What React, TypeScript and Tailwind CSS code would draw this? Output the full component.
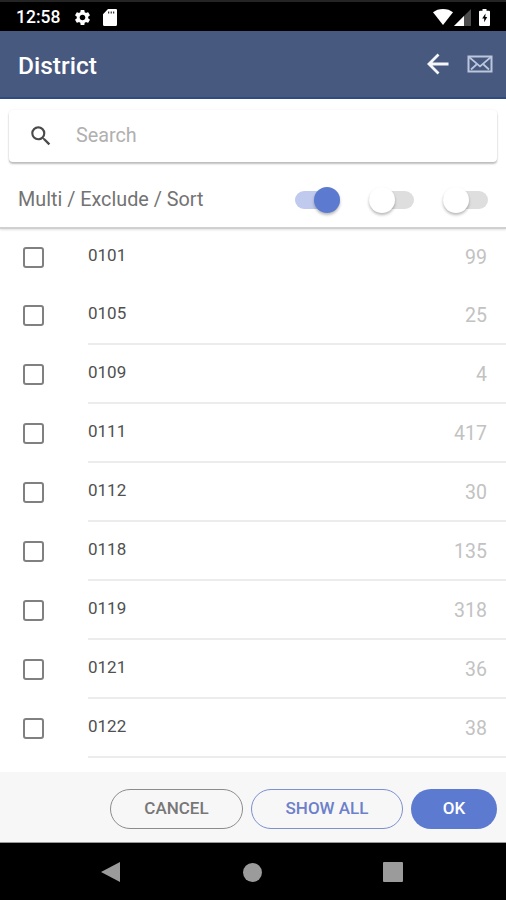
import React, { useState } from "react";
import { MdSearch, MdSettings } from "react-icons/md";

type District = {
  code: string;
  count: number;
};

const DISTRICTS: District[] = [
  { code: "0101", count: 99 },
  { code: "0105", count: 25 },
  { code: "0109", count: 4 },
  { code: "0111", count: 417 },
  { code: "0112", count: 30 },
  { code: "0118", count: 135 },
  { code: "0119", count: 318 },
  { code: "0121", count: 36 },
  { code: "0122", count: 38 },
];

const StatusBar: React.FC = () => (
  <div className="flex h-[31px] shrink-0 items-center border-t-2 border-[#242424] bg-black pt-px pl-4 text-white">
    <span className="w-[57px] pt-px text-[17.5px] leading-none font-medium">12:58</span>
    <MdSettings className="size-[19px]" />
    <svg className="ml-[11px] h-[17px] w-[14px]" viewBox="0 0 14 17" fill="currentColor">
      <path
        fillRule="evenodd"
        d="M5 0h7.3A1.5 1.5 0 0 1 14 1.6v13.8a1.6 1.6 0 0 1-1.7 1.6H1.7A1.6 1.6 0 0 1 0 15.400V5.200ZM5.200 2.600v1.800h1V2.600Zm2.500 0v1.800h1V2.600Zm2.500 0v1.800h1V2.600Z"
      />
    </svg>
    <div className="mr-4 ml-auto flex items-center">
      <svg className="h-4 w-5" viewBox="0 0 20 16" fill="currentColor">
        <path d="M10 16 0 3.300C2.600 1.200 6 0 10 0s7.400 1.200 10 3.300Z" />
      </svg>
      <svg className="ml-px h-[17px] w-[17px]" viewBox="0 0 17 17" fill="currentColor">
        <path d="M17 0v17H0Z" opacity=".3" />
        <path d="M10 7v10H0Z" />
      </svg>
      <svg className="ml-2 h-[17px] w-[11px]" viewBox="0 0 11 17" fill="currentColor">
        <path
          fillRule="evenodd"
          d="M3.500 0h4v1.700H10a1 1 0 0 1 1 1V16a1 1 0 0 1-1 1H1a1 1 0 0 1-1-1V2.700a1 1 0 0 1 1-1h2.500ZM6.500 4.500 3.200 9.600h2v3.700l3-5.200H6.300Z"
        />
      </svg>
    </div>
  </div>
);

const Header: React.FC = () => (
  <header className="flex h-[68px] shrink-0 items-center border-b-2 border-[#2f4b80] bg-[#48597f] pr-[13px] pl-[18px] text-white">
    <h1 className="pt-[5px] text-[24.5px] leading-none font-medium">District</h1>
    <button className="ml-auto">
      <svg className="size-[22px] text-[#f4f6fb]" viewBox="0 0 22 22" fill="none" stroke="currentColor">
        <path d="M11.500 1.500 2 11l9.500 9.500M2.500 11H21.500" strokeWidth="2.800" />
      </svg>
    </button>
    <button className="ml-[18px]">
      <svg className="h-[18px] w-[26px] text-[#bcc6dc]" viewBox="0 0 26 18" fill="none" stroke="currentColor">
        <rect x="1.500" y="1.500" width="23" height="15" strokeWidth="2" />
        <path d="m2 2 11 9.500L24 2M4 14.500l5.500-5M22 14.500l-5.500-5" strokeWidth="1.700" />
      </svg>
    </button>
  </header>
);

const Toggle: React.FC<{ on: boolean; onClick: () => void }> = ({ on, onClick }) => (
  <button
    onClick={onClick}
    className={`flex h-[18px] w-[45px] items-center rounded-full ${
      on ? "justify-end bg-[#c0caee]" : "justify-start bg-[#dedede]"
    }`}
  >
    <span
      className={`size-[26px] shrink-0 rounded-full shadow-[0_2px_3px_rgba(0,0,0,0.28)] ${
        on ? "bg-[#5d7ad1]" : "bg-white"
      }`}
    />
  </button>
);

const App: React.FC = () => {
  const [options, setOptions] = useState([true, false, false]);
  const [selected, setSelected] = useState<string[]>([]);

  const toggleOption = (index: number) =>
    setOptions(options.map((value, i) => (i === index ? !value : value)));

  const toggleDistrict = (code: string) =>
    setSelected(selected.includes(code) ? selected.filter((c) => c !== code) : [...selected, code]);

  return (
    <div className="flex h-[900px] w-[506px] flex-col overflow-hidden bg-white font-['Roboto',sans-serif]">
      <StatusBar />
      <Header />

      <div className="flex h-[130px] shrink-0 flex-col border-b-2 border-[#d0d0d0] px-[9px] pt-[11px] shadow-[0_1px_2px_rgba(0,0,0,0.12)]">
        <div className="flex h-[52px] shrink-0 items-center rounded-sm pl-[19px] shadow-[0_2px_2px_rgba(0,0,0,0.25),0_0_2px_rgba(0,0,0,0.08)]">
          <MdSearch className="size-[26px] text-[#4a4a4a]" />
          <input
            placeholder="Search"
            className="mb-0.5 ml-[22px] w-80 text-[19.800px] leading-none outline-none placeholder:text-[#b0b0b0]"
          />
        </div>
        <div className="flex flex-1 items-center pt-[10px] pr-[9px] pl-[9px]">
          <span className="mr-auto text-[19.800px] leading-none text-[#737373]">Multi / Exclude / Sort</span>
          <div className="flex gap-[29px]">
            {options.map((on, index) => (
              <Toggle key={index} on={on} onClick={() => toggleOption(index)} />
            ))}
          </div>
        </div>
      </div>

      <ul className="h-[543px] shrink-0 overflow-hidden">
        {DISTRICTS.map(({ code, count }, index) => (
          <li key={code} className={`flex pl-[23px] ${index === 0 ? "h-[57px]" : "h-[59px] pt-px"}`}>
            <button
              onClick={() => toggleDistrict(code)}
              className={`mt-[18px] size-[21px] shrink-0 rounded-[3px] border-2 border-[#808080] ${
                selected.includes(code) ? "bg-[#5d7ad1]" : "bg-white"
              }`}
            />
            <div
              className={`ml-11 flex flex-1 justify-between pt-4 pr-[19px] ${
                index === 0 ? "" : "border-b-2 border-[#ececec]"
              }`}
            >
              <span className="text-[17px] leading-5 text-[#505050]">{code}</span>
              <span className="pt-px text-[19.500px] leading-6 text-[#c2c2c2]">{count}</span>
            </div>
          </li>
        ))}
      </ul>

      <footer className="flex h-[71px] shrink-0 items-start justify-end gap-2 border-b border-[#999] bg-[#f7f7f7] pt-[17px] pr-[9px] text-[17px] font-medium">
        <button className="h-10 w-[133px] rounded-full border border-[#8c8c8c] text-[#777]">CANCEL</button>
        <button className="h-10 w-[152px] rounded-full border border-[#7d90d0] text-[#6c80cb]">SHOW ALL</button>
        <button className="h-10 w-[86px] rounded-full bg-[#5d7ad1] text-white">OK</button>
      </footer>

      <nav className="flex flex-1 items-center bg-black pt-px pl-[101px] text-[#9b9b9b]">
        <svg className="h-5 w-[19px]" viewBox="0 0 19 20" fill="currentColor">
          <path d="M19 0v20L0 10Z" />
        </svg>
        <span className="ml-[123px] size-[19px] rounded-full bg-[#9b9b9b]" />
        <span className="ml-[121px] size-5 rounded-[1px] bg-[#9b9b9b]" />
      </nav>
    </div>
  );
};

export default App;
